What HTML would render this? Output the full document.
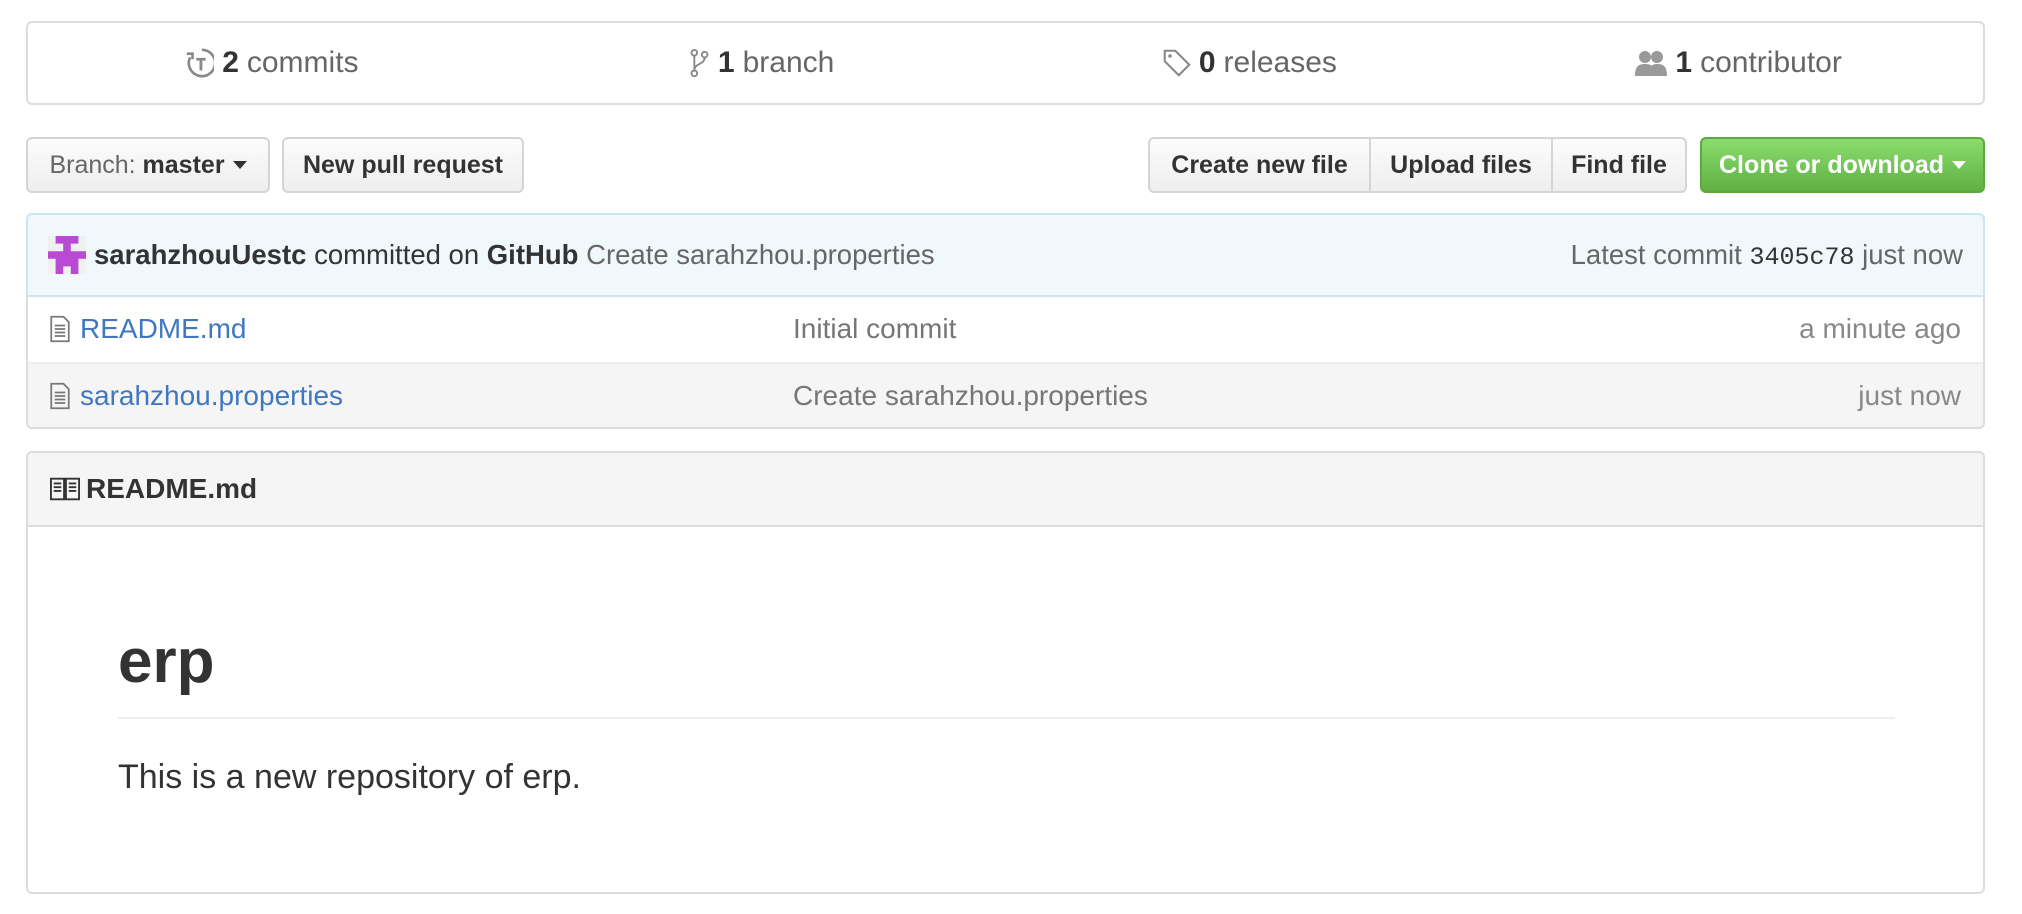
<!DOCTYPE html>
<html><head><meta charset="utf-8"><style>
*{box-sizing:border-box;margin:0;padding:0}
body{width:2022px;height:914px;background:#fff;font-family:"Liberation Sans",sans-serif;color:#333;position:relative;overflow:hidden}
.abs{position:absolute}
.stats{left:26px;top:21px;width:1959px;height:84px;border:2px solid #ddd;border-radius:6px;display:flex}
.stats div{flex:1;display:flex;align-items:center;justify-content:center;font-size:30px;color:#666}
.stats b{color:#333;margin-right:8px}
.stats svg{margin-right:8px}
.btn{top:137px;height:56px;border:2px solid #d5d5d5;border-radius:6px;background:linear-gradient(#fcfcfc,#eee);font-size:25px;font-weight:bold;display:flex;align-items:center;justify-content:center;color:#333}
.caret{display:inline-block;width:0;height:0;border-left:7px solid transparent;border-right:7px solid transparent;border-top:8px solid currentColor;margin-left:8px}
.commit{left:26px;top:213px;width:1959px;height:84px;background:#f1f8fb;border:2px solid #c9e6f2;border-radius:6px 6px 0 0;font-size:27.5px;display:flex;align-items:center;padding:0 20px}
.files{left:26px;top:296px;width:1959px;height:133px;border:2px solid #ddd;border-top:none;border-radius:0 0 6px 6px;overflow:hidden}
.row{height:66px;display:flex;align-items:center;font-size:28px;position:relative;padding-left:20px}
.row+.row{background:#f5f5f5;border-top:2px solid #eee}
.row a{color:#4078c0;margin-left:8px}
.row .msg{position:absolute;left:765px;color:#767676}
.row .age{position:absolute;right:22px;color:#888}
.readme{left:26px;top:451px;width:1959px;height:443px;border:2px solid #ddd;border-radius:6px;overflow:hidden}
.rh{height:74px;background:#f5f5f5;border-bottom:2px solid #ddd;display:flex;align-items:center;padding-left:22px;font-size:28px;font-weight:bold}
</style></head><body>
<div class="abs stats">
<div><svg width="28" height="30" viewBox="0 0 14 16"><path d="M8 1a7 7 0 1 1-6.3 4" fill="none" stroke="#888" stroke-width="1.4"/><path d="M0 3l3 0 0 3" fill="none" stroke="#888" stroke-width="1.4"/><path d="M5 6h5M7.5 6v6" stroke="#888" stroke-width="1.5"/></svg><b>2</b>commits</div>
<div><svg width="22" height="30" viewBox="0 0 10 16"><circle cx="2.5" cy="2.5" r="1.5" fill="none" stroke="#888"/><circle cx="2.5" cy="13.5" r="1.5" fill="none" stroke="#888"/><circle cx="8" cy="3.5" r="1.5" fill="none" stroke="#888"/><path d="M2.5 4v8M8 5c0 4-5.5 3-5.5 7" fill="none" stroke="#888"/></svg><b>1</b>branch</div>
<div><svg width="28" height="28" viewBox="0 0 16 16"><path d="M1 1h6l8 8-6 6-8-8z" fill="none" stroke="#888" stroke-width="1.2"/><circle cx="4" cy="4" r="1" fill="#888"/></svg><b>0</b>releases</div>
<div><svg width="32" height="26" viewBox="0 0 16 13"><circle cx="5" cy="3.5" r="3" fill="#999"/><circle cx="11" cy="3.5" r="3" fill="#999"/><path d="M0 13c0-5 2-6 5-6s5 1 5 6zM7 13c0-4 1-6 4-6s5 1 5 6z" fill="#999"/></svg><b>1</b>contributor</div>
</div>
<div class="abs btn" style="left:26px;width:244px"><span style="font-weight:normal;color:#666">Branch:&nbsp;</span>master<span class="caret"></span></div>
<div class="abs btn" style="left:282px;width:242px">New pull request</div>
<div class="abs btn" style="left:1148px;width:223px;border-radius:6px 0 0 6px">Create new file</div>
<div class="abs btn" style="left:1369px;width:184px;border-radius:0">Upload files</div>
<div class="abs btn" style="left:1551px;width:136px;border-radius:0 6px 6px 0">Find file</div>
<div class="abs btn" style="left:1700px;width:285px;background:linear-gradient(#8add6d,#60b044);border-color:#5ca941;color:#fff">Clone or download<span class="caret"></span></div>
<div class="abs commit">
<svg width="38" height="38" viewBox="0 0 5 5" style="margin-right:8px;background:#f0f0f0"><path d="M1 0h3v1H3v1h2v1H4v2H3V4H2v1H1V3H0V2h2V1H1z" fill="#b84ad3"/></svg>
<b>sarahzhouUestc</b>&nbsp;committed on&nbsp;<b>GitHub</b>&nbsp;<span style="color:#666">Create sarahzhou.properties</span>
<span style="margin-left:auto;color:#666">Latest commit <span style="font-family:'Liberation Mono',monospace;color:#333;font-size:25px">3405c78</span> just now</span>
</div>
<div class="abs files">
<div class="row"><svg width="24" height="28" viewBox="0 0 12 16"><path d="M1 1h7l3 3v11H1z" fill="none" stroke="#777"/><path d="M3 6h6M3 8h6M3 10h6M3 12h6" stroke="#777"/></svg><a>README.md</a><span class="msg">Initial commit</span><span class="age">a minute ago</span></div>
<div class="row"><svg width="24" height="28" viewBox="0 0 12 16"><path d="M1 1h7l3 3v11H1z" fill="none" stroke="#777"/><path d="M3 6h6M3 8h6M3 10h6M3 12h6" stroke="#777"/></svg><a>sarahzhou.properties</a><span class="msg">Create sarahzhou.properties</span><span class="age">just now</span></div>
</div>
<div class="abs readme">
<div class="rh"><svg width="30" height="24" viewBox="0 0 16 12" style="margin-right:6px"><path d="M0.5 0.5h7v11h-7zM8.5 0.5h7v11h-7z" fill="none" stroke="#333"/><path d="M2 3h4M2 5h4M2 7h4M10 3h4M10 5h4M10 7h4" stroke="#333"/></svg>README.md</div>
<div class="abs" style="left:90px;top:169px;font-size:62px;font-weight:bold;line-height:80px">erp</div>
<div class="abs" style="left:90px;top:264px;width:1777px;height:2px;background:#eee"></div>
<div class="abs" style="left:90px;top:303px;font-size:34px;line-height:42px">This is a new repository of erp.</div>
</div>
</body></html>
